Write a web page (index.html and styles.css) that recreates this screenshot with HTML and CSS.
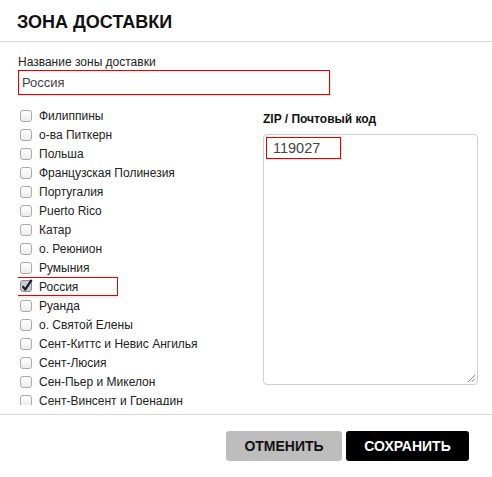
FILE: index.html
```html
<!DOCTYPE html>
<html lang="ru">
<head>
  <meta charset="UTF-8" />
  <title>Зона доставки</title>
  <link rel="stylesheet" href="styles.css">
</head>
<body>
  <div class="modal">
    <div class="modal-header">
      <h2>ЗОНА ДОСТАВКИ</h2>
    </div>

    <div class="modal-body">
      <label class="field-label" for="zoneName">Название зоны доставки</label>
      <input type="text" id="zoneName" class="text-input marked" value="Россия">

      <div class="columns">
        <ul class="countries">
          <li class="country"><span class="box"></span>Филиппины</li>
          <li class="country"><span class="box"></span>о-ва Питкерн</li>
          <li class="country"><span class="box"></span>Польша</li>
          <li class="country"><span class="box"></span>Французская Полинезия</li>
          <li class="country"><span class="box"></span>Португалия</li>
          <li class="country"><span class="box"></span>Puerto Rico</li>
          <li class="country"><span class="box"></span>Катар</li>
          <li class="country"><span class="box"></span>о. Реюнион</li>
          <li class="country"><span class="box"></span>Румыния</li>
          <li class="country">
            <span class="picked">
              <svg class="tick" width="14" height="14" viewBox="0 0 14 14">
                <rect x="0.5" y="1.5" width="11" height="11" rx="2.5" fill="#c9cbd6" stroke="#8a8c98"/>
                <path d="M2.6 7.2 L5.2 10.6 L11.6 0.8" fill="none" stroke="#1d1d24" stroke-width="2.2" stroke-linejoin="round"/>
              </svg>Россия
            </span>
          </li>
          <li class="country"><span class="box"></span>Руанда</li>
          <li class="country"><span class="box"></span>о. Святой Елены</li>
          <li class="country"><span class="box"></span>Сент-Киттс и Невис Ангилья</li>
          <li class="country"><span class="box"></span>Сент-Люсия</li>
          <li class="country"><span class="box"></span>Сен-Пьер и Микелон</li>
          <li class="country"><span class="box"></span>Сент-Винсент и Гренадин</li>
        </ul>

        <div class="zip">
          <div class="zip-label">ZIP / Почтовый код</div>
          <div class="zip-area">
            <span class="zip-value">119027</span>
            <svg class="grip" width="10" height="10" viewBox="0 0 10 10">
              <path d="M9 2 L2 9 M9 5.5 L5.5 9" stroke="#888" stroke-width="1" fill="none"/>
            </svg>
          </div>
        </div>
      </div>
    </div>

    <div class="modal-footer">
      <button class="btn btn-cancel">ОТМЕНИТЬ</button>
      <button class="btn btn-save">СОХРАНИТЬ</button>
    </div>
  </div>
</body>
</html>
```

FILE: styles.css
```css
* {
  box-sizing: border-box;
}

body {
  margin: 0;
  background: #ffffff;
  font-family: 'Liberation Sans', Arial, sans-serif;
  color: #222;
}

.modal {
  width: 492px;
}

.modal-header {
  padding: 10px 18px 7px 17px;
  border-bottom: 1px solid #d6d6d6;
}

.modal-header h2 {
  margin: 0;
  font-size: 18px;
  line-height: 24px;
  font-weight: bold;
  color: #111;
}

.modal-body {
  padding: 12px 14px 9px 18px;
}

.field-label {
  display: block;
  font-size: 12px;
  line-height: 16px;
  color: #222;
}

.text-input {
  display: block;
  width: 312px;
  height: 25px;
  margin: 0;
  padding: 0 3px;
  font-family: inherit;
  font-size: 13px;
  color: #444;
  border: 1px solid #ccc;
  border-radius: 0;
  box-shadow: inset 0 1px 2px rgba(0, 0, 0, 0.08);
}

.marked {
  border-color: #e50000;
  box-shadow: 1px 1px 0 #e2e2e2, inset 0 1px 2px rgba(0, 0, 0, 0.08);
}

.columns {
  display: grid;
  grid-template-columns: 245px 1fr;
  margin-top: 11px;
}

.countries {
  list-style: none;
  margin: 0;
  padding: 0;
  height: 299px;
  overflow: hidden;
}

.country {
  display: flex;
  align-items: center;
  height: 19px;
  padding-left: 2px;
  font-size: 12px;
  color: #222;
}

.box {
  display: inline-block;
  width: 12px;
  height: 12px;
  margin-right: 7px;
  border: 1px solid #a9a9a9;
  border-radius: 3px;
  background: linear-gradient(#ffffff, #ececec);
}

.picked {
  display: inline-flex;
  align-items: center;
  width: 105px;
  height: 19px;
  margin-left: -7px;
  padding-left: 6px;
  border: 1px solid #e50000;
  box-shadow: 0 2px 0 #ececec;
}

.tick {
  display: block;
  margin-right: 5px;
  margin-top: -2px;
}

.zip {
  padding-top: 5px;
}

.zip-label {
  font-size: 12px;
  line-height: 16px;
  font-weight: bold;
  color: #111;
  margin-bottom: 7px;
}

.zip-area {
  position: relative;
  height: 251px;
  border: 1px solid #cfcfcf;
  border-radius: 4px;
  padding: 2px;
}

.zip-value {
  display: inline-block;
  width: 75px;
  height: 22px;
  padding: 2px 0 0 6px;
  font-size: 14.5px;
  color: #444;
  border: 1px solid #e50000;
  box-shadow: 1px 1px 0 #e2e2e2;
}

.grip {
  position: absolute;
  right: 1px;
  bottom: 1px;
}

.modal-footer {
  display: flex;
  justify-content: flex-end;
  gap: 4px;
  padding: 16px 23px 16px 0;
  border-top: 1px solid #d6d6d6;
}

.btn {
  height: 30px;
  border: none;
  border-radius: 3px;
  font-family: inherit;
  font-size: 14px;
  font-weight: bold;
  cursor: pointer;
}

.btn-cancel {
  width: 116px;
  background: #bdbdbd;
  color: #111;
}

.btn-save {
  width: 123px;
  background: #000;
  color: #fff;
}
```
